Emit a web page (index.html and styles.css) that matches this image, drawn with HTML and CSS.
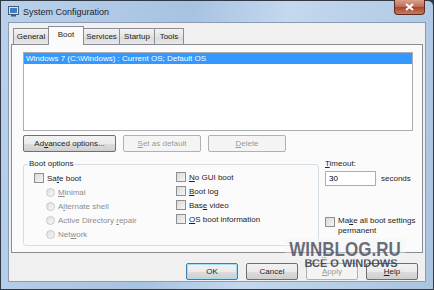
FILE: index.html
```html
<!DOCTYPE html>
<html lang="en">
<head>
    <meta charset="UTF-8">
    <title>System Configuration</title>
    <link rel="stylesheet" href="styles.css">
</head>
<body>
    <div class="window">
        <div class="titlebar">
            <svg class="app-icon" width="11" height="11" viewBox="0 0 11 11">
                <rect x="0.5" y="0.5" width="10" height="8" fill="#d8e4f0" stroke="#4a5a70"/>
                <rect x="2" y="2" width="7" height="5" fill="#3d7ec9"/>
                <rect x="3" y="9" width="5" height="1.5" fill="#4a5a70"/>
            </svg>
            <span class="title">System Configuration</span>
            <div class="close-btn">
                <svg width="9" height="8" viewBox="0 0 9 8">
                    <path d="M1 1 L8 7 M8 1 L1 7" stroke="#fff" stroke-width="2"/>
                </svg>
            </div>
        </div>

        <div class="client">
            <div class="tabs">
                <div class="tab tab-general">General</div>
                <div class="tab active">Boot</div>
                <div class="tab tab-services">Services</div>
                <div class="tab tab-startup">Startup</div>
                <div class="tab tab-tools">Tools</div>
            </div>

            <div class="panel">
                <div class="listbox">
                    <div class="list-item selected">Windows 7 (C:\Windows) : Current OS; Default OS</div>
                </div>

                <div class="button-row">
                    <button class="btn btn-wide">Ad<u>v</u>anced options...</button>
                    <button class="btn btn-mid" disabled><u>S</u>et as default</button>
                    <button class="btn btn-mid" disabled><u>D</u>elete</button>
                </div>

                <div class="lower">
                    <fieldset class="group">
                        <legend>Boot options</legend>
                        <div class="group-cols">
                            <div class="col">
                                <label class="check"><span class="box"></span><span>Sa<u>f</u>e boot</span></label>
                                <label class="radio disabled"><span class="dot"></span><span><u>M</u>inimal</span></label>
                                <label class="radio disabled"><span class="dot"></span><span>A<u>l</u>ternate shell</span></label>
                                <label class="radio disabled"><span class="dot"></span><span>Active Directory <u>r</u>epair</span></label>
                                <label class="radio disabled"><span class="dot"></span><span>Net<u>w</u>ork</span></label>
                            </div>
                            <div class="col col-right">
                                <label class="check"><span class="box"></span><span><u>N</u>o GUI boot</span></label>
                                <label class="check"><span class="box"></span><span><u>B</u>oot log</span></label>
                                <label class="check"><span class="box"></span><span>Bas<u>e</u> video</span></label>
                                <label class="check"><span class="box"></span><span><u>O</u>S boot information</span></label>
                            </div>
                        </div>
                    </fieldset>

                    <div class="side">
                        <div class="timeout-label"><u>T</u>imeout:</div>
                        <div class="timeout-row">
                            <input class="timeout" type="text" value="30">
                            <span>seconds</span>
                        </div>
                        <label class="check permanent"><span class="box"></span><span>Ma<u>k</u>e all boot settings<br>permanent</span></label>
                    </div>
                </div>
            </div>

            <div class="dialog-buttons">
                <button class="btn btn-ok">OK</button>
                <button class="btn">Cancel</button>
                <button class="btn" disabled><u>A</u>pply</button>
                <button class="btn"><u>H</u>elp</button>
            </div>

            <div class="watermark">
                <div class="wm-big">WINBLOG.RU</div>
                <div class="wm-small">ВСЁ О WINDOWS</div>
            </div>
        </div>
    </div>
</body>
</html>
```

FILE: styles.css
```css
body {
    margin: 0;
    padding: 0;
    font-family: "Liberation Sans", Arial, sans-serif;
    font-size: 8px;
    color: #1e1e1e;
    background: #2b3440;
}
.window {
    position: relative;
    width: 434px;
    height: 290px;
    box-sizing: border-box;
    border: 1px solid #2f3a46;
    border-radius: 0 6px 0 0;
    background: linear-gradient(100deg, #b9d1ea 0%, #a7c3e2 40%, #c4d8ee 60%, #a9c4e1 100%);
    padding: 0 7px 7px 7px;
    display: flex;
    flex-direction: column;
}
.titlebar {
    height: 21px;
    display: flex;
    align-items: center;
    position: relative;
}
.app-icon {
    margin: 0 4px 0 0;
}
.title {
    font-size: 9px;
    color: #1a2230;
}
.close-btn {
    position: absolute;
    right: 1px;
    top: -1px;
    width: 31px;
    height: 15px;
    border: 1px solid #5b2a20;
    border-top: none;
    border-radius: 0 0 4px 4px;
    background: linear-gradient(#d8a08e, #c06a52 50%, #a9432c 51%, #c87a5e);
    display: flex;
    justify-content: center;
    align-items: center;
    box-sizing: border-box;
}
.client {
    flex: 1;
    background: #f0f0f0;
    border: 1px solid #8a9bb2;
    padding: 3px 2px 0 2px;
    display: flex;
    flex-direction: column;
    position: relative;
}
.tabs {
    display: flex;
    padding-left: 2px;
    height: 18px;
    align-items: flex-end;
    position: relative;
    z-index: 1;
}
.tab {
    height: 16px;
    line-height: 16px;
    text-align: center;
    white-space: nowrap;
    border: 1px solid #8c8e94;
    border-bottom: none;
    margin-right: -1px;
    background: linear-gradient(#f3f3f3, #e4e4e4 50%, #dadada 51%, #e8e8e8);
    box-sizing: border-box;
}
.tab-general { width: 36px; }
.tab-services { width: 37px; }
.tab-startup { width: 36px; }
.tab-tools { width: 30px; }
.tab.active {
    width: 36px;
    height: 19px;
    background: #fbfbfb;
    line-height: 15px;
    position: relative;
    top: 1px;
    border-color: #898c95;
}
.panel {
    height: 209px;
    box-sizing: border-box;
    border: 1px solid #898c95;
    background: #fbfbfb;
    padding: 7px 9px 0 11px;
}
.listbox {
    height: 79px;
    box-sizing: border-box;
    border: 1px solid #abadb3;
    background: #fff;
}
.list-item {
    height: 11px;
    line-height: 11px;
    padding-left: 2px;
}
.list-item.selected {
    background: #3399ff;
    color: #fff;
}
.button-row {
    display: flex;
    gap: 7px;
    margin-top: 4px;
}
.btn {
    font-family: inherit;
    font-size: 8px;
    height: 17px;
    width: 52px;
    padding: 0;
    border: 1px solid #707070;
    border-radius: 2px;
    background: linear-gradient(#f2f2f2, #ebebeb 50%, #dddddd 51%, #cfcfcf);
    color: #1e1e1e;
}
.btn:disabled {
    border-color: #adb2b5;
    background: #f4f4f4;
    color: #9a9a9a;
}
.btn-wide {
    width: 93px;
}
.btn-mid {
    width: 78px;
}
.lower {
    display: flex;
    margin-top: 7px;
}
.group {
    width: 277px;
    height: 87px;
    box-sizing: border-box;
    margin: 0;
    padding: 0 0 0 10px;
    border: 1px solid #d5dfe5;
    border-radius: 3px;
}
.group legend {
    padding: 0 1px;
    margin-left: -6px;
    line-height: 10px;
}
.group-cols {
    display: flex;
    padding-top: 2px;
}
.col {
    display: flex;
    flex-direction: column;
    width: 142px;
}
.col-right {
    margin-top: -1px;
}
.check, .radio {
    display: flex;
    align-items: center;
    height: 14px;
}
.radio {
    padding-left: 12px;
}
.disabled {
    color: #8d8d8d;
}
.box {
    width: 10px;
    height: 10px;
    box-sizing: border-box;
    border: 1px solid #8f8f8f;
    background: linear-gradient(135deg, #d9d9d9, #f6f6f6);
    margin-right: 3px;
    flex-shrink: 0;
}
.dot {
    width: 9px;
    height: 9px;
    box-sizing: border-box;
    border: 1px solid #c8c8c8;
    border-radius: 50%;
    background: linear-gradient(135deg, #e0e0e0, #f8f8f8);
    margin-right: 3px;
}
.side {
    flex: 1;
    padding-left: 6px;
    display: flex;
    flex-direction: column;
}
.timeout-label {
    height: 12px;
    line-height: 12px;
    margin-top: -1px;
}
.timeout-row {
    display: flex;
    align-items: center;
    gap: 5px;
    margin-top: 1px;
}
.timeout {
    width: 51px;
    height: 15px;
    box-sizing: border-box;
    border: 1px solid #abadb3;
    font-family: inherit;
    font-size: 8px;
    padding: 0 3px;
    margin: 0;
}
.permanent {
    margin-top: 30px;
    align-items: flex-start;
    height: auto;
    line-height: 10px;
    white-space: nowrap;
}
.permanent .box {
    margin-top: 1px;
}
.dialog-buttons {
    display: flex;
    justify-content: flex-end;
    gap: 8px;
    padding: 10px 5px 0 0;
}
.btn-ok {
    border-color: #3c7fb1;
    box-shadow: inset 0 0 0 1px #a8dbf4;
}
.watermark {
    position: absolute;
    left: 265px;
    top: 215px;
    width: 142px;
    text-align: center;
    font-family: "Liberation Sans", Arial, sans-serif;
    font-weight: bold;
}
.wm-big {
    font-size: 20px;
    line-height: 22px;
    color: rgba(72, 78, 94, 0.82);
    background: rgba(245, 245, 245, 0.4);
    transform: scaleX(0.85);
}
.wm-small {
    font-size: 11px;
    line-height: 12px;
    margin-top: -3px;
    color: rgba(50, 56, 68, 0.85);
    padding-left: 12px;
}
```
